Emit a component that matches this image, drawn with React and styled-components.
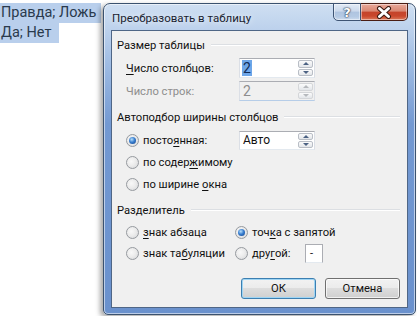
import React from 'react'
import styled, { createGlobalStyle } from 'styled-components'

const GlobalStyle = createGlobalStyle`
  html, body {
    margin: 0;
    padding: 0;
    background: #fff;
  }
  body {
    font-family: Roboto, "Liberation Sans", sans-serif;
  }
`

const Page = styled.div`
  width: 417px;
  height: 316px;
  display: flex;
  align-items: flex-start;
  overflow: hidden;
`

const Doc = styled.div`
  width: 103px;
  flex: none;
  padding-top: 3px;
  font-family: Roboto, "Liberation Sans", sans-serif;
  font-size: 14.5px;
  color: #2a3a4c;
`

const SelLine = styled.div`
  display: inline-block;
  background: #b9cfec;
  height: 20px;
  line-height: 20px;
  width: ${(p) => p.$w}px;
  padding-left: 1px;
  white-space: nowrap;
  box-sizing: border-box;
`

const Window = styled.div`
  flex: none;
  margin-top: 3px;
  width: 313px;
  height: 312px;
  box-sizing: border-box;
  border: 1px solid #3b526f;
  border-radius: 7px 7px 5px 5px;
  padding: 0 7px 7px 7px;
  display: flex;
  flex-direction: column;
  background: linear-gradient(
    to bottom,
    #cfdff2 0px,
    #bcd1ec 26px,
    #9fbce3 60px,
    #7399d2 120px,
    #6a91cd 100%
  );
  box-shadow: -3px 2px 5px rgba(0, 0, 0, 0.35), inset 0 0 0 1px rgba(255, 255, 255, 0.55);
`

const TitleBar = styled.div`
  height: 26px;
  flex: none;
  display: flex;
  align-items: flex-start;
  justify-content: space-between;
`

const Title = styled.div`
  font-size: 11.5px;
  line-height: 14px;
  padding: 7px 0 0 1px;
  color: #1b2330;
  text-shadow: 0 0 6px rgba(255, 255, 255, 0.9);
`

const Caption = styled.div`
  display: flex;
  margin-top: -1px;
`

const CapButton = styled.div`
  height: 18px;
  box-sizing: border-box;
  border: 1px solid #3e5474;
  display: flex;
  align-items: center;
  justify-content: center;
  box-shadow: inset 0 0 0 1px rgba(255, 255, 255, 0.45);
  ${(p) =>
    p.$close
      ? `
    width: 47px;
    border-left: none;
    border-color: #4a1d14;
    border-radius: 0 0 5px 0;
    background: linear-gradient(to bottom, #e9a99a 0%, #d98772 45%, #c4442b 50%, #c9472c 75%, #dc7a5a 100%);
  `
      : `
    width: 28px;
    border-radius: 0 0 0 5px;
    background: linear-gradient(to bottom, #e2ebf6 0%, #cbd9ec 45%, #afc4e0 50%, #b5cae4 80%, #cfdcee 100%);
  `}
`

const HelpGlyph = styled.span`
  font-family: "DejaVu Sans", sans-serif;
  font-weight: bold;
  font-size: 13px;
  line-height: 13px;
  color: #fff;
  text-shadow: 0 0 1px #2d3d55, 0 0 1px #2d3d55, 0 0 2px #2d3d55;
`

const Client = styled.div`
  flex: 1;
  border: 1px solid #4f6686;
  background: #f0f0f0;
  padding: 6px 7px 8px 5px;
  display: flex;
  flex-direction: column;
  font-family: Roboto, "Liberation Sans", sans-serif;
  font-size: 11.2px;
  color: #111;
`

const GroupHead = styled.div`
  display: flex;
  align-items: center;
  gap: 6px;
  height: 16px;
  margin-top: ${(p) => p.$top || 0}px;
  &::after {
    content: '';
    flex: 1;
    height: 1px;
    background: #dcdfe3;
    border-bottom: 1px solid #fff;
  }
`

const Rows = styled.div`
  display: flex;
  flex-direction: column;
  gap: ${(p) => p.$gap || 0}px;
  margin-top: ${(p) => p.$top || 0}px;
  padding-left: 9px;
`

const Row = styled.div`
  display: flex;
  align-items: center;
  height: ${(p) => p.$h || 20}px;
`

const Cell = styled.div`
  width: ${(p) => p.$w}px;
  flex: none;
  display: flex;
  align-items: center;
  white-space: nowrap;
  color: ${(p) => (p.$disabled ? '#8d8d8d' : 'inherit')};
`

const U = styled.span`
  text-decoration: underline;
  text-underline-offset: 2px;
`

const Radio = styled.span`
  width: 13px;
  height: 13px;
  flex: none;
  box-sizing: border-box;
  border-radius: 50%;
  border: 1px solid #969a9f;
  background: radial-gradient(circle at 40% 40%, #f8f8f8 0%, #ececec 45%, #d3d5d8 100%);
  margin-right: 4px;
  display: flex;
  align-items: center;
  justify-content: center;
  &::after {
    content: '';
    display: ${(p) => (p.$on ? 'block' : 'none')};
    width: 7px;
    height: 7px;
    border-radius: 50%;
    background: radial-gradient(circle at 40% 35%, #b8e0fb 0%, #3a7fd0 45%, #0d3f88 100%);
  }
`

const Spin = styled.div`
  width: 76px;
  height: ${(p) => p.$h || 20}px;
  box-sizing: border-box;
  border: 1px solid #abadb3;
  border-left-color: #dbdfe6;
  border-right-color: #dbdfe6;
  border-bottom-color: ${(p) => (p.$disabled ? '#b6cde8' : '#e3e9ef')};
  background: ${(p) => (p.$disabled ? '#f0f0f0' : '#fff')};
  display: flex;
  align-items: center;
  padding-left: 2px;
  color: ${(p) => (p.$disabled ? '#8d8d8d' : '#111')};
`

const SpinValue = styled.span`
  flex: 1;
  line-height: 16px;
  font-size: ${(p) => (p.$big ? 14 : 12)}px;
  & > span {
    background: ${(p) => (p.$sel ? '#6ea6e8' : 'transparent')};
    color: ${(p) => (p.$sel ? '#102a55' : 'inherit')};
    padding: 0 1px;
  }
`

const SpinButtons = styled.div`
  width: 15px;
  align-self: stretch;
  display: flex;
  flex-direction: column;
  padding: 1px 1px 1px 0;
  gap: 1px;
`

const SpinBtn = styled.div`
  flex: 1;
  border: 1px solid ${(p) => (p.$disabled ? '#d4d6d9' : '#b9bec6')};
  border-radius: 2px;
  background: linear-gradient(to bottom, #fbfbfb, #e3e6ea);
  display: flex;
  align-items: center;
  justify-content: center;
  &::after {
    content: '';
    border-left: 3px solid transparent;
    border-right: 3px solid transparent;
    ${(p) => (p.$down ? 'border-top' : 'border-bottom')}: 3px solid
      ${(p) => (p.$disabled ? '#b6b9bd' : '#4c6283')};
  }
`

const SmallBox = styled.div`
  width: 18px;
  height: 19px;
  box-sizing: border-box;
  border: 1px solid #abadb3;
  border-bottom-color: #e3e9ef;
  background: #fff;
  margin-left: auto;
  margin-right: 11px;
  display: flex;
  align-items: center;
  padding-left: 4px;
`

const Buttons = styled.div`
  display: flex;
  justify-content: flex-end;
  gap: 9px;
  margin-top: 14px;
  padding-right: 0;
`

const Button = styled.div`
  width: 75px;
  height: 21px;
  box-sizing: border-box;
  border: 1px solid ${(p) => (p.$default ? '#3c7fb1' : '#707070')};
  border-radius: 3px;
  background: linear-gradient(to bottom, #f2f2f2 0%, #ebebeb 49%, #dddddd 50%, #cfcfcf 100%);
  box-shadow: inset 0 0 0 1px ${(p) => (p.$default ? '#9fd5f4' : 'rgba(255,255,255,0.7)')};
  display: flex;
  align-items: center;
  justify-content: center;
  color: #111;
`

function SpinBox({ value, disabled, sel, h, big }) {
  return (
    <Spin $disabled={disabled} $h={h}>
      <SpinValue $sel={sel} $big={big}>
        <span>{value}</span>
      </SpinValue>
      <SpinButtons>
        <SpinBtn $disabled={disabled} />
        <SpinBtn $disabled={disabled} $down />
      </SpinButtons>
    </Spin>
  )
}

function CloseGlyph() {
  return (
    <svg width="16" height="13" viewBox="0 0 16 13">
      <path d="M3.5 2.5 L12.5 10.5 M12.5 2.5 L3.5 10.5" stroke="#3a1a12" strokeWidth="5" strokeLinecap="round" />
      <path d="M3.5 2.5 L12.5 10.5 M12.5 2.5 L3.5 10.5" stroke="#fff" strokeWidth="3" strokeLinecap="round" />
    </svg>
  )
}

export default function App() {
  return (
    <Page>
      <GlobalStyle />
      <Doc>
        <SelLine $w={101}>Правда; Ложь</SelLine>
        <SelLine $w={59}>Да; Нет</SelLine>
      </Doc>
      <Window>
        <TitleBar>
          <Title>Преобразовать в таблицу</Title>
          <Caption>
            <CapButton>
              <HelpGlyph>?</HelpGlyph>
            </CapButton>
            <CapButton $close>
              <CloseGlyph />
            </CapButton>
          </Caption>
        </TitleBar>
        <Client>
          <GroupHead>Размер таблицы</GroupHead>
          <Rows $top={5} $gap={3}>
            <Row>
              <Cell $w={113}>
                <span>
                  <U>Ч</U>исло столбцов:
                </span>
              </Cell>
              <SpinBox value="2" sel big />
            </Row>
            <Row>
              <Cell $w={113} $disabled>
                Число строк:
              </Cell>
              <SpinBox value="2" disabled big />
            </Row>
          </Rows>

          <GroupHead $top={8}>Автоподбор ширины столбцов</GroupHead>
          <Rows $top={4}>
            <Row $h={22}>
              <Cell $w={113}>
                <Radio $on />
                <span>
                  посто<U>я</U>нная:
                </span>
              </Cell>
              <SpinBox value="Авто" h={19} />
            </Row>
            <Row $h={22}>
              <Cell $w={200}>
                <Radio />
                <span>
                  по содер<U>ж</U>имому
                </span>
              </Cell>
            </Row>
            <Row $h={22}>
              <Cell $w={200}>
                <Radio />
                <span>
                  по ширине <U>о</U>кна
                </span>
              </Cell>
            </Row>
          </Rows>

          <GroupHead $top={7}>Разделитель</GroupHead>
          <Rows $top={4}>
            <Row $h={21}>
              <Cell $w={109}>
                <Radio />
                <span>
                  <U>з</U>нак абзаца
                </span>
              </Cell>
              <Cell $w={99}>
                <Radio $on />
                <span>
                  точ<U>к</U>а с запятой
                </span>
              </Cell>
            </Row>
            <Row $h={21}>
              <Cell $w={109}>
                <Radio />
                <span>
                  знак та<U>б</U>уляции
                </span>
              </Cell>
              <Cell $w={99}>
                <Radio />
                <span>
                  дру<U>г</U>ой:
                </span>
                <SmallBox>-</SmallBox>
              </Cell>
            </Row>
          </Rows>

          <Buttons>
            <Button $default>ОК</Button>
            <Button>Отмена</Button>
          </Buttons>
        </Client>
      </Window>
    </Page>
  )
}
